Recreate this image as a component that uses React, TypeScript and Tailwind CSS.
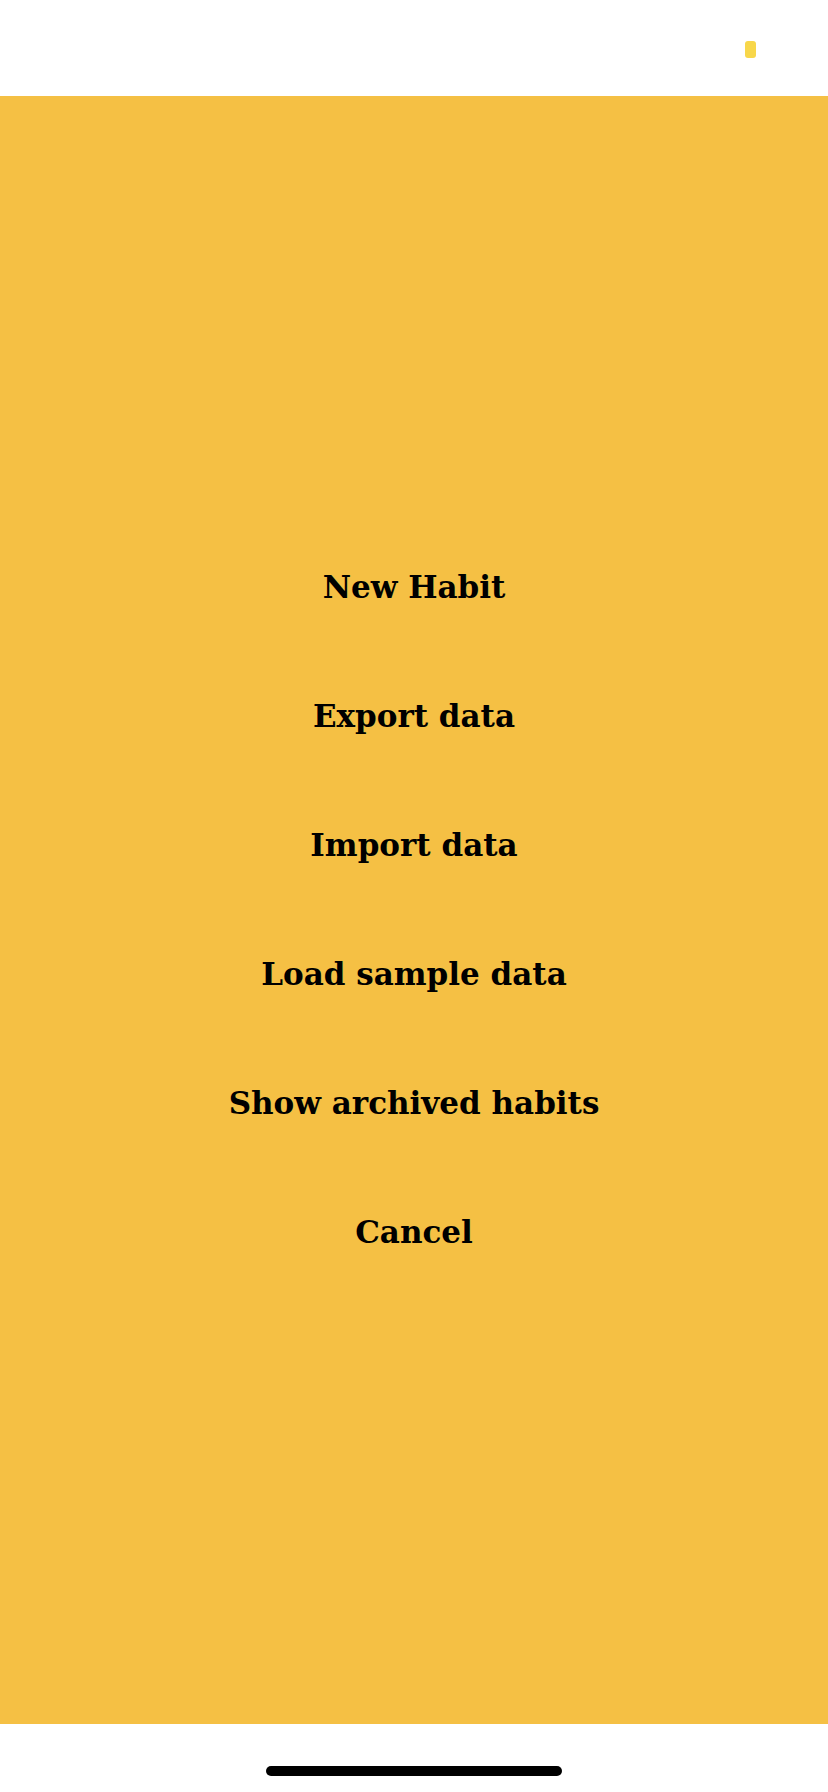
import React from 'react';

const items = [
  'New Habit',
  'Export data',
  'Import data',
  'Load sample data',
  'Show archived habits',
  'Cancel',
];

const App: React.FC = () => {
  return (
    <div className="flex h-[1792px] w-[828px] flex-col bg-white">
      <div className="flex h-[96px] shrink-0 justify-end bg-white pr-[72px] pt-[41px]">
        <div className="h-[17px] w-[11px] rounded-[3px] bg-[#f8d74a]" />
      </div>
      <div className="flex flex-1 flex-col items-center justify-center bg-[#f5c044]">
        {items.map((item) => (
          <button
            key={item}
            className="flex h-[129px] items-center justify-center text-[31px] font-bold text-black"
            style={{ fontFamily: '"DejaVu Serif", serif' }}
          >
            {item}
          </button>
        ))}
      </div>
      <div className="flex h-[68px] shrink-0 justify-center bg-white pt-[42px]">
        <div className="h-[10px] w-[296px] rounded-full bg-black" />
      </div>
    </div>
  );
};

export default App;
